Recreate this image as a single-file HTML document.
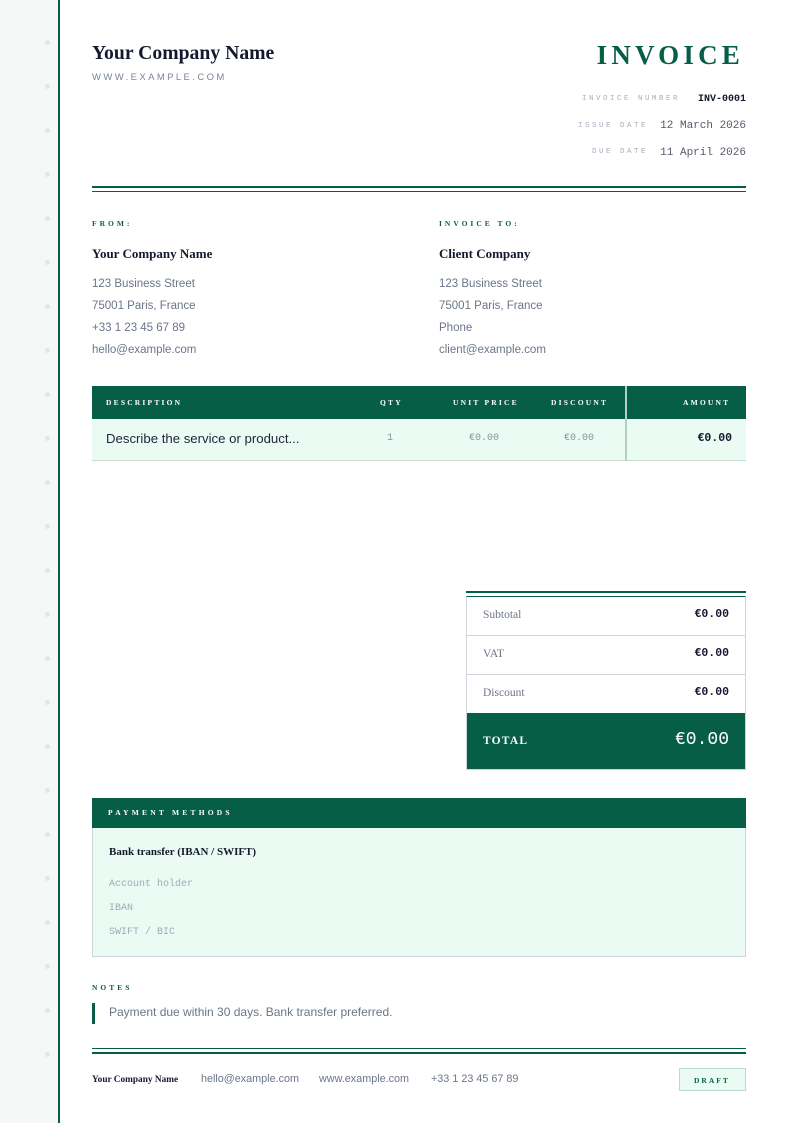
<!DOCTYPE html>
<html><head><meta charset="utf-8"><style>
*{margin:0;padding:0;box-sizing:border-box}
body{width:794px;height:1123px;position:relative;background:#fff;font-family:"Liberation Sans",sans-serif;overflow:hidden}
.a{position:absolute;white-space:nowrap}
.serif{font-family:"Liberation Serif",serif}
.mono{font-family:"Liberation Mono",monospace}
.g{color:#075e47}
.muted{color:#6b7589}
.dot{position:absolute;left:45px;width:5px;height:5px;border-radius:50%;background:#dfe8e4}
.lbl{font-family:"Liberation Serif",serif;font-weight:bold;font-size:7.5px;letter-spacing:3px;color:#075e47}
.th{font-family:"Liberation Serif",serif;font-weight:bold;font-size:7.5px;letter-spacing:2.2px;color:#fff}
</style></head><body>
<div class="a" style="left:0;top:0;width:58px;height:1123px;background:#f6f8f7"></div>
<div class="a" style="left:58px;top:0;width:2px;height:1123px;background:#075e47"></div>
<div class="dot" style="top:40px"></div><div class="dot" style="top:84px"></div><div class="dot" style="top:128px"></div><div class="dot" style="top:172px"></div><div class="dot" style="top:216px"></div><div class="dot" style="top:260px"></div><div class="dot" style="top:304px"></div><div class="dot" style="top:348px"></div><div class="dot" style="top:392px"></div><div class="dot" style="top:436px"></div><div class="dot" style="top:480px"></div><div class="dot" style="top:524px"></div><div class="dot" style="top:568px"></div><div class="dot" style="top:612px"></div><div class="dot" style="top:656px"></div><div class="dot" style="top:700px"></div><div class="dot" style="top:744px"></div><div class="dot" style="top:788px"></div><div class="dot" style="top:832px"></div><div class="dot" style="top:876px"></div><div class="dot" style="top:920px"></div><div class="dot" style="top:964px"></div><div class="dot" style="top:1008px"></div><div class="dot" style="top:1052px"></div>

<div class="a serif" style="left:92px;top:42px;font-size:19.7px;font-weight:bold;color:#141a2e">Your Company Name</div>
<div class="a" style="left:92px;top:72px;font-size:9.5px;letter-spacing:2.4px;color:#7a8499">WWW.EXAMPLE.COM</div>
<div class="a serif g" style="right:50px;top:40px;font-size:27px;font-weight:bold;letter-spacing:4.2px">INVOICE</div>
<div class="a mono" style="right:114px;top:95px;font-size:7.5px;letter-spacing:2.5px;color:#a8aebb">INVOICE NUMBER</div>
<div class="a mono" style="right:48px;top:94px;font-size:10px;font-weight:bold;color:#141a2e">INV-0001</div>
<div class="a mono" style="right:146px;top:122px;font-size:7.5px;letter-spacing:2.5px;color:#a8aebb">ISSUE DATE</div>
<div class="a mono" style="right:48px;top:120px;font-size:11px;color:#555b6b">12 March 2026</div>
<div class="a mono" style="right:146px;top:148px;font-size:7.5px;letter-spacing:2.5px;color:#a8aebb">DUE DATE</div>
<div class="a mono" style="right:48px;top:147px;font-size:11px;color:#555b6b">11 April 2026</div>
<div class="a" style="left:92px;top:186px;width:654px;height:2px;background:#075e47"></div>
<div class="a" style="left:92px;top:191px;width:654px;height:1px;background:#075e47"></div>

<div class="a lbl" style="left:92px;top:219px">FROM:</div>
<div class="a lbl" style="left:439px;top:219px">INVOICE TO:</div>
<div class="a serif" style="left:92px;top:246px;font-size:13px;font-weight:bold;color:#141a2e">Your Company Name</div>
<div class="a serif" style="left:439px;top:246px;font-size:13px;font-weight:bold;color:#141a2e">Client Company</div>
<div class="a muted" style="left:92px;top:273px;font-size:11.5px;line-height:22px">123 Business Street<br>75001 Paris, France<br>+33 1 23 45 67 89<br>hello@example.com</div>
<div class="a muted" style="left:439px;top:273px;font-size:11.5px;line-height:22px">123 Business Street<br>75001 Paris, France<br>Phone<br>client@example.com</div>

<div class="a" style="left:92px;top:386px;width:654px;height:33px;background:#075e47"></div>
<div class="a th" style="left:106px;top:398px">DESCRIPTION</div>
<div class="a th" style="left:380px;top:398px">QTY</div>
<div class="a th" style="left:453px;top:398px">UNIT PRICE</div>
<div class="a th" style="left:551px;top:398px">DISCOUNT</div>
<div class="a th" style="left:683px;top:398px">AMOUNT</div>
<div class="a" style="left:92px;top:419px;width:654px;height:42px;background:#eafbf3;border-bottom:1px solid #c9dcd4"></div>
<div class="a" style="left:625px;top:386px;width:2px;height:75px;background:#b5cfc4"></div>
<div class="a" style="left:106px;top:431px;font-size:13.2px;color:#1e2436">Describe the service or product...</div>
<div class="a mono" style="left:387px;top:433px;font-size:10px;color:#8a90a0">1</div>
<div class="a mono" style="left:469px;top:433px;font-size:10px;color:#8a90a0">€0.00</div>
<div class="a mono" style="left:564px;top:433px;font-size:10px;color:#8a90a0">€0.00</div>
<div class="a mono" style="right:62px;top:432px;font-size:11.5px;font-weight:bold;color:#141a2e">€0.00</div>

<div class="a" style="left:466px;top:591px;width:280px;height:2px;background:#075e47"></div>
<div class="a" style="left:466px;top:596px;width:280px;height:174px;border:1px solid #cfd4dc;border-top:1px solid #075e47"></div>
<div class="a" style="left:467px;top:635px;width:278px;height:1px;background:#cfd4dc"></div>
<div class="a" style="left:467px;top:674px;width:278px;height:1px;background:#cfd4dc"></div>
<div class="a" style="left:467px;top:713px;width:278px;height:56px;background:#075e47"></div>
<div class="a serif muted" style="left:483px;top:609px;font-size:11.5px">Subtotal</div>
<div class="a serif muted" style="left:483px;top:648px;font-size:11.5px">VAT</div>
<div class="a serif muted" style="left:483px;top:687px;font-size:11.5px">Discount</div>
<div class="a mono" style="right:65px;top:608px;font-size:11.5px;font-weight:bold;color:#141a2e">€0.00</div>
<div class="a mono" style="right:65px;top:647px;font-size:11.5px;font-weight:bold;color:#141a2e">€0.00</div>
<div class="a mono" style="right:65px;top:686px;font-size:11.5px;font-weight:bold;color:#141a2e">€0.00</div>
<div class="a serif" style="left:483px;top:735px;font-size:11.5px;font-weight:bold;letter-spacing:1.2px;color:#fff">TOTAL</div>
<div class="a mono" style="right:65px;top:730px;font-size:18px;color:#fff">€0.00</div>

<div class="a" style="left:92px;top:798px;width:654px;height:30px;background:#075e47"></div>
<div class="a th" style="left:108px;top:808px;letter-spacing:3.2px">PAYMENT METHODS</div>
<div class="a" style="left:92px;top:828px;width:654px;height:129px;background:#eafbf3;border:1px solid #cfd4dc;border-top:none"></div>
<div class="a serif" style="left:109px;top:846px;font-size:11px;font-weight:bold;color:#141a2e">Bank transfer (IBAN / SWIFT)</div>
<div class="a mono" style="left:109px;top:873px;font-size:10px;line-height:24px;color:#a3a9b5">Account holder<br>IBAN<br>SWIFT / BIC</div>

<div class="a lbl" style="left:92px;top:983px">NOTES</div>
<div class="a" style="left:92px;top:1003px;width:3px;height:21px;background:#075e47"></div>
<div class="a muted" style="left:109px;top:1005px;font-size:12px">Payment due within 30 days. Bank transfer preferred.</div>

<div class="a" style="left:92px;top:1048px;width:654px;height:1px;background:#075e47"></div>
<div class="a" style="left:92px;top:1052px;width:654px;height:2px;background:#075e47"></div>
<div class="a serif" style="left:92px;top:1075px;font-size:9.3px;font-weight:bold;color:#141a2e">Your Company Name</div>
<div class="a muted" style="left:201px;top:1073px;font-size:10.8px">hello@example.com</div>
<div class="a muted" style="left:319px;top:1073px;font-size:10.8px">www.example.com</div>
<div class="a muted" style="left:431px;top:1073px;font-size:10.8px">+33 1 23 45 67 89</div>
<div class="a" style="left:679px;top:1068px;width:67px;height:23px;background:#eafbf3;border:1px solid #b9dccd"></div>
<div class="a lbl" style="left:694px;top:1076px;letter-spacing:2px">DRAFT</div>
</body></html>
